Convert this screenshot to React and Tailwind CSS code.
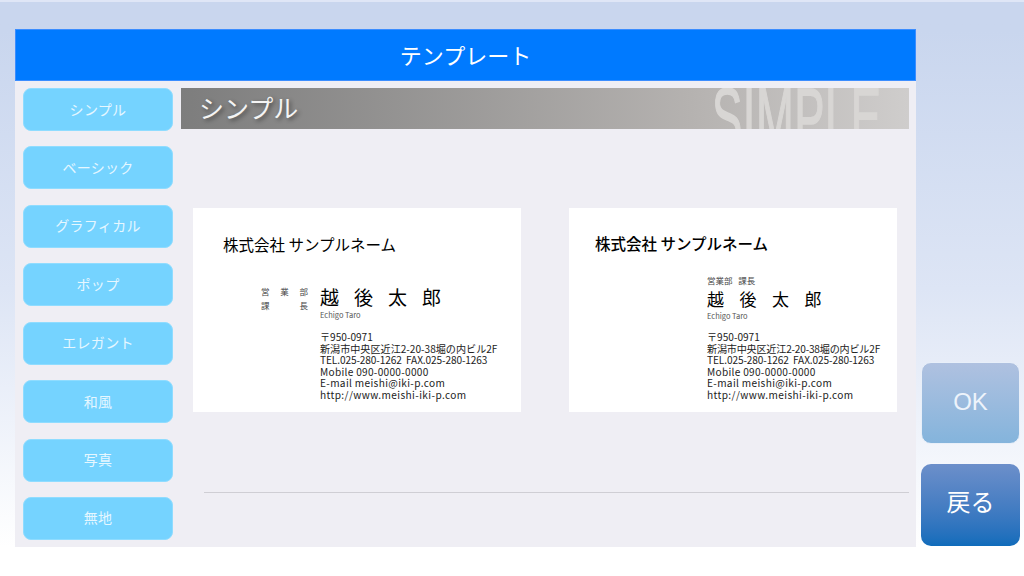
import React from "react";

const jp = "font-['Noto_Sans_CJK_JP','Noto_Sans',sans-serif]";
const categories = ["シンプル", "ベーシック", "グラフィカル", "ポップ", "エレガント", "和風", "写真", "無地"];

function Address({ tight }) {
  return (
    <div className="text-[10.1px] leading-[11.5px] text-[#222] whitespace-nowrap">
      <div>〒950-0971</div>
      <div className={tight ? "tracking-[-0.2px]" : ""}>新潟市中央区近江2-20-38堀の内ビル2F</div>
      <div className="tracking-[-0.1px]">TEL.025-280-1262&nbsp; FAX.025-280-1263</div>
      <div className="tracking-[0.3px]">Mobile 090-0000-0000</div>
      <div className="tracking-[0.35px]">E-mail meishi@iki-p.com</div>
      <div className="tracking-[0.4px]">http://www.meishi-iki-p.com</div>
    </div>
  );
}

function CardOne() {
  return (
    <div className="w-[328px] h-[204px] bg-white pt-[26px] pl-[30px] text-black">
      <div className="text-[15.5px] leading-[20px]">株式会社 サンプルネーム</div>
      <div className="flex mt-[30px] ml-[38px]">
        <div className="w-[47px] mr-[12px] text-[8.5px] leading-[14px] text-[#444]">
          <div className="flex justify-between"><span>営</span><span>業</span><span>部</span></div>
          <div className="flex justify-between"><span>課</span><span>長</span></div>
        </div>
        <div>
          <div className="text-[19px] leading-[26px] tracking-[15px] whitespace-nowrap">越後太郎</div>
          <div className="text-[7.5px] leading-[10px] text-[#555]">Echigo Taro</div>
          <div className="mt-[11px]"><Address /></div>
        </div>
      </div>
    </div>
  );
}

function CardTwo() {
  return (
    <div className="w-[328px] h-[204px] bg-white pt-[25px] pl-[26px] text-black">
      <div className="text-[15.5px] leading-[20px] font-medium">株式会社 サンプルネーム</div>
      <div className="ml-[112px] mt-[21px]">
        <div className="text-[8.5px] leading-[12px] text-[#444]">営業部&nbsp;&nbsp;&nbsp;課長</div>
        <div className="text-[17px] leading-[24px] tracking-[15.5px] whitespace-nowrap mt-[1px]">越後太郎</div>
        <div className="text-[7.5px] leading-[10px] text-[#555]">Echigo Taro</div>
        <div className="mt-[10px]"><Address tight /></div>
      </div>
    </div>
  );
}

export default function App() {
  return (
    <div className={`${jp} w-[1024px] h-[576px] overflow-hidden flex pt-[27px] pl-[15px] border-t-2 border-[#dfe6f6] bg-gradient-to-b from-[#c9d6ee] from-5% via-[#dde5f5] via-50% to-white to-95%`}>
      <div className="w-[901px] h-[518px] bg-[#efeef4] flex flex-col">
        <div className="h-[52px] bg-[#007aff] border border-[#3b8dff] flex items-center justify-center text-white text-[22px] pb-[2px]">
          テンプレート
        </div>
        <div className="flex-1 flex pt-[7px] pl-[8px] pr-[7px] gap-[8px]">
          <div className="w-[150px] flex flex-col gap-[15.43px]">
            {categories.map((name) => (
              <div
                key={name}
                className="h-[43px] rounded-[8px] bg-[#75d3ff] border border-[#8fdcff] flex items-center justify-center text-[14px] tracking-[0.3px] text-[#e6f7ff] pb-[1px]"
              >
                {name}
              </div>
            ))}
          </div>
          <div className="flex-1 flex flex-col">
            <div className="relative h-[41px] overflow-hidden bg-gradient-to-r from-[#7d7d7d] via-[#b5b2b0] via-70% to-[#cfcdcc] flex items-center pl-[18px] pb-[2px]">
              <span className="text-[25px] text-[#f4f4f4] [text-shadow:2px_2px_4px_rgba(0,0,0,0.45)]">シンプル</span>
              <span className="absolute left-[531px] top-[-13px] font-['Liberation_Sans',sans-serif] text-[84px] leading-[84px] tracking-[1px] text-[#d8d6d4] [-webkit-text-stroke:1.5px_#d8d6d4] scale-x-[0.54] origin-left whitespace-nowrap">
                SIMPLE
              </span>
            </div>
            <div className="flex justify-between px-[12px] mt-[79px]">
              <CardOne />
              <CardTwo />
            </div>
            <div className="h-px bg-[#cfced4] ml-[23px] mt-[80px]" />
          </div>
        </div>
      </div>
      <div className="ml-[5px] mt-[333px] flex flex-col gap-[20px]">
        <div className="w-[99px] h-[82px] rounded-[10px] border border-[#e8eff9] bg-gradient-to-b from-[#afc1e0] to-[#84b4dc] flex items-center justify-center text-[24px] text-[#edf3fb] font-['Liberation_Sans',sans-serif] pb-[2px]">
          OK
        </div>
        <div className="w-[99px] h-[82px] rounded-[10px] bg-gradient-to-b from-[#6c8fca] to-[#0f6cbb] flex items-center justify-center text-[24px] text-white pb-[8px]">
          戻る
        </div>
      </div>
    </div>
  );
}
